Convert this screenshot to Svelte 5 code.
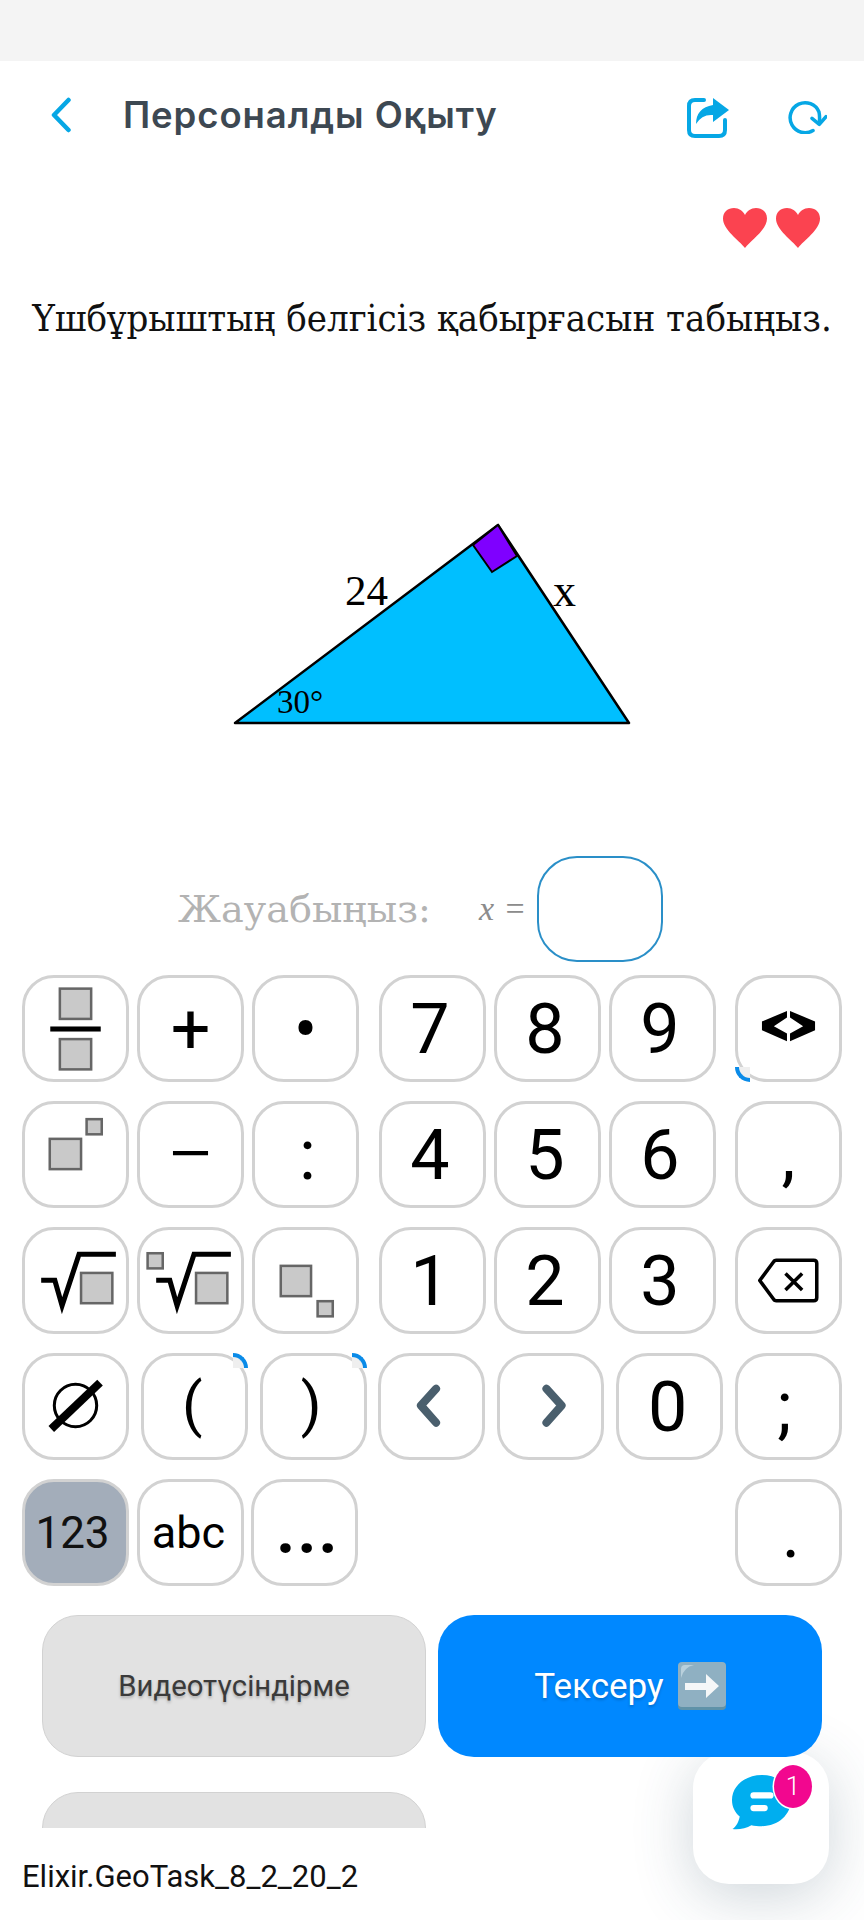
<script>
	const rows = [
		{
			groups: [
				[{ icon: 'fraction' }, { label: '+' }, { label: '•' }],
				[{ label: '7' }, { label: '8' }, { label: '9' }],
				[{ icon: 'toggle', spin: 'bl' }]
			]
		},
		{
			groups: [
				[{ icon: 'power' }, { label: '−', cls: 'minus' }, { label: ':', cls: 'colon' }],
				[{ label: '4' }, { label: '5' }, { label: '6' }],
				[{ label: ',' }]
			]
		},
		{
			groups: [
				[{ icon: 'root' }, { icon: 'nroot' }, { icon: 'sub' }],
				[{ label: '1' }, { label: '2' }, { label: '3' }],
				[{ icon: 'erase' }]
			]
		}
	];

	const arrows = [
		{ icon: 'empty' },
		{ label: '(', spin: 'tr', cls: 'paren' },
		{ label: ')', spin: 'tr', cls: 'paren' },
		{ icon: 'left' },
		{ icon: 'right' },
		{ label: '0' },
		{ label: ';', cls: 'semi' }
	];

	const isDigit = (label) => /[0-9]/.test(label || '');
</script>

{#snippet keyIcon(name)}
	<svg class="key-icon" viewBox="0 0 106 106" aria-hidden="true">
		{#if name === 'fraction'}
			<rect class="slot" x="37.5" y="13.5" width="31" height="30" />
			<rect x="28" y="51" width="50" height="5" />
			<rect class="slot" x="37.5" y="63.5" width="31" height="30" />
		{:else if name === 'power'}
			<rect class="slot" x="27.5" y="37.5" width="31" height="30" />
			<rect class="slot" x="64" y="18" width="15" height="15" />
		{:else if name === 'sub'}
			<rect class="slot" x="28.5" y="38.5" width="30" height="30" />
			<rect class="slot" x="65" y="73.5" width="15" height="15" />
		{:else if name === 'root'}
			<path class="radical" d="M19 52.7H32.5L39.7 78L56.5 27H93" />
			<rect class="slot" x="58.5" y="45.5" width="31" height="30" />
		{:else if name === 'nroot'}
			<path class="radical" d="M19 52.7H32.5L39.7 78L56.5 27H93" />
			<rect class="slot" x="58.5" y="45.5" width="31" height="30" />
			<rect class="slot" x="10.5" y="26" width="15" height="15" />
		{:else if name === 'toggle'}
			<path d="M26.7 46L51.5 35.7V42L38.5 50.7L51.5 58V65.7L26.7 54.7Z" />
			<path d="M54.5 35.7L79.3 46V54.7L54.5 65.7V58L67.5 50.7L54.5 42Z" />
		{:else if name === 'erase'}
			<path class="outline" d="M24.5 53L39 33.5Q40 33 41 33H78Q81 33 81 36V70Q81 73 78 73H41Q40 73 39 72.5Z" />
			<path class="cross" d="M50 46L66.5 62.5M66.5 46L50 62.5" />
		{:else if name === 'empty'}
			<circle class="ring" cx="53" cy="52" r="21" />
			<path class="slash" d="M29 75.3L77.3 29.3" />
		{:else if name === 'left'}
			<path class="chev" d="M57.5 35.5L42.5 52L57.5 69" />
		{:else if name === 'right'}
			<path class="chev" d="M49 35.5L64 52L49 69" />
		{/if}
	</svg>
{/snippet}

{#snippet key(item)}
	<button type="button" class="key {item.cls || ''}" class:num={isDigit(item.label)}>
		{#if item.icon}
			{@render keyIcon(item.icon)}
		{:else}
			{item.label}
		{/if}
		{#if item.spin}
			<span class="spin {item.spin}"></span>
		{/if}
	</button>
{/snippet}

<div class="page">
	<div class="status"></div>

	<header class="topbar">
		<svg class="back" viewBox="0 0 22 36" aria-hidden="true">
			<path d="M18.5 3L4 18L18.5 33" />
		</svg>
		<h1>Персоналды Оқыту</h1>
		<svg class="share" viewBox="0 0 42 40" aria-hidden="true">
			<path class="share-box" d="M17 2H8Q2 2 2 8V32Q2 38 8 38H32Q38 38 38 32V22" />
			<path class="share-arrow" d="M26 0L42 12L26 24V17Q15 16 9 26Q9 10 26 7Z" />
		</svg>
		<svg class="reload" viewBox="0 0 40 34" aria-hidden="true">
			<path class="reload-ring" d="M26 30.500A15 15 0 1 1 32 12Q33 17 32.300 22" />
			<path class="reload-ring" d="M25 18.300L32.300 24.300L39 16.700" />
		</svg>
	</header>

	<div class="lives">
		{#each [0, 1] as heart}
			<svg class="heart" viewBox="0 0 44 40" aria-hidden="true">
				<path d="M22 40C16 32 0 22 0 10.500C0 4 5 0 11 0C16 0 20 3 22 7C24 3 28 0 33 0C39 0 44 4 44 10.500C44 22 28 32 22 40Z" />
			</svg>
		{/each}
	</div>

	<p class="question">Үшбұрыштың белгісіз қабырғасын табыңыз.</p>

	<svg class="figure" viewBox="0 0 864 280" aria-hidden="false">
		<path class="tri" d="M235 243L498 45L629 243Z" />
		<path class="right-angle" d="M473 65L492 92L517 76L498 45Z" />
		<text class="lbl" x="345" y="125" font-size="43">24</text>
		<text class="lbl" x="553" y="126" font-size="46">x</text>
		<text class="lbl" x="277" y="233" font-size="33">30°</text>
	</svg>

	<div class="answer">
		<span class="answer-label">Жауабыңыз:</span>
		<span class="answer-var"><i>x</i> =</span>
		<span class="answer-box"></span>
	</div>

	<div class="keyboard">
		{#each rows as row}
			<div class="row">
				{#each row.groups as group}
					<div class="group">
						{#each group as item}
							{@render key(item)}
						{/each}
					</div>
				{/each}
			</div>
		{/each}

		<div class="row">
			{#each arrows as item}
				{@render key(item)}
			{/each}
		</div>

		<div class="row">
			<div class="group tight">
				<button type="button" class="key word on">123</button>
				<button type="button" class="key word">abc</button>
				<button type="button" class="key dots">...</button>
			</div>
			<button type="button" class="key stop">.</button>
		</div>
	</div>

	<div class="actions">
		<button type="button" class="action video">Видеотүсіндірме</button>
		<button type="button" class="action check">
			Тексеру
			<svg class="emoji" viewBox="0 0 48 48" aria-hidden="true">
				<rect x="0" y="1" width="48" height="47" rx="4" fill="#5f92a8" />
				<rect x="0" y="0" width="48" height="45" rx="4" fill="#8fb0c2" />
				<path d="M3 16V7Q3 3 7 3H16Q6 5 3 16Z" fill="#b9d0dc" />
				<path d="M7 21H28V12L41 24L28 36V28H7Z" fill="#f5f7f8" />
			</svg>
		</button>
		<button type="button" class="action video"></button>
	</div>

	<footer class="footer">Elixir.GeoTask_8_2_20_2</footer>

	<div class="chat">
		<svg class="bubble" viewBox="0 0 62 60" aria-hidden="true">
			<path d="M32 2C15 2 1 13 1 28C1 35 4 41 9 45C8 50 6 55 1.500 58C8 59 16 57 21 54C24 55 28 55 32 55C49 55 62 43 62 28C62 13 49 2 32 2Z" />
			<rect class="bar" x="20" y="20" width="24" height="6.500" rx="3.200" />
			<rect class="bar" x="20" y="33" width="18" height="6.500" rx="3.200" />
		</svg>
		<span class="badge">1</span>
	</div>
</div>

<style>
	:global(body) {
		margin: 0;
		background: #fff;
	}

	.page {
		position: relative;
		width: 864px;
		height: 1920px;
		overflow: hidden;
		background: #fff;
		font-family: Roboto, "Liberation Sans", sans-serif;
	}

	.status {
		height: 61px;
		background: #f4f4f4;
	}

	.topbar {
		display: flex;
		align-items: center;
		height: 108px;
		padding-left: 50px;
	}

	.back {
		width: 22px;
		height: 36px;
		fill: none;
		stroke: #06a7e5;
		stroke-width: 4.500;
		stroke-linecap: round;
		stroke-linejoin: round;
	}

	h1 {
		margin: 0 0 0 51px;
		flex: 1;
		font-family: Inter, "Noto Sans", sans-serif;
		font-size: 36.500px;
		font-weight: 600;
		letter-spacing: 0.900px;
		color: #3d4852;
	}

	.share {
		width: 42px;
		height: 40px;
		margin-top: 6px;
		margin-right: 58px;
	}

	.share-box {
		fill: none;
		stroke: #06a7e5;
		stroke-width: 4;
		stroke-linecap: round;
	}

	.share-arrow {
		fill: #06a7e5;
	}

	.reload {
		width: 40px;
		height: 34px;
		margin-top: 4px;
		margin-right: 37px;
	}

	.reload-ring {
		fill: none;
		stroke: #06a7e5;
		stroke-width: 3.500;
		stroke-linecap: round;
		stroke-linejoin: round;
	}

	.lives {
		display: flex;
		justify-content: flex-end;
		gap: 9px;
		height: 40px;
		margin-top: 39px;
		padding-right: 44px;
	}

	.heart {
		width: 44px;
		height: 40px;
		fill: #fb4350;
	}

	.question {
		margin: 46px 0 0;
		text-align: center;
		font-family: "DejaVu Serif Condensed", "DejaVu Serif", serif;
		font-size: 38px;
		line-height: 48px;
		color: #111;
	}

	.figure {
		display: block;
		width: 864px;
		height: 280px;
		margin-top: 138px;
	}

	.tri {
		fill: #00bfff;
		stroke: #000;
		stroke-width: 2.500;
		stroke-linejoin: round;
	}

	.right-angle {
		fill: #7f00ff;
		stroke: #000;
		stroke-width: 2;
	}

	.lbl {
		font-family: "Liberation Serif", serif;
		fill: #000;
	}

	.answer {
		display: flex;
		align-items: center;
		height: 106px;
		margin-top: 96px;
		padding-left: 178px;
	}

	.answer-label {
		width: 250px;
		font-family: "DejaVu Serif", serif;
		font-size: 38.200px;
		color: #b3b3b3;
		white-space: nowrap;
	}

	.answer-var {
		width: 48px;
		margin-left: 51px;
		font-family: "Liberation Serif", serif;
		font-size: 34px;
		color: #8c8c8c;
		white-space: pre;
		word-spacing: 3px;
	}

	.answer-box {
		box-sizing: border-box;
		width: 126px;
		height: 106px;
		margin-left: 10px;
		border: 2px solid #2a8fc8;
		border-radius: 40px;
	}

	.keyboard {
		display: flex;
		flex-direction: column;
		gap: 19px;
		margin-top: 13px;
		padding: 0 22px;
	}

	.row {
		display: flex;
		justify-content: space-between;
	}

	.group {
		display: flex;
		gap: 8px;
	}

	.group.tight {
		gap: 7.500px;
	}

	.key {
		position: relative;
		display: flex;
		align-items: center;
		justify-content: center;
		width: 107px;
		height: 107px;
		padding: 0;
		box-sizing: border-box;
		background: #fff;
		border: 3px solid #d2d2d2;
		border-radius: 32px;
		font-family: Roboto, "Liberation Sans", sans-serif;
		font-size: 70px;
		line-height: 1;
		color: #000;
	}

	.key.num {
		padding-right: 4px;
	}

	.key.paren {
		padding-right: 4px;
		padding-bottom: 4px;
		font-size: 60px;
	}

	.key.minus {
		font-size: 86px;
		font-weight: 300;
	}

	.key.colon {
		padding-left: 4px;
	}

	.key.semi {
		padding-right: 8px;
	}

	.key.stop {
		padding-left: 5px;
	}

	.key.word {
		padding-right: 3px;
		font-size: 45px;
	}

	.key.word.on {
		padding-right: 6px;
		font-size: 44px;
		background: #a3adba;
		color: #111;
	}

	.key.dots {
		padding-left: 5px;
		padding-bottom: 14px;
		font-size: 76px;
		font-weight: 500;
	}

	.key-icon {
		position: absolute;
		left: -3px;
		top: -3px;
		width: 107px;
		height: 107px;
	}

	.slot {
		fill: #c9c9c9;
		stroke: #666;
		stroke-width: 2.500;
	}

	.radical {
		fill: none;
		stroke: #000;
		stroke-width: 5;
	}

	.outline {
		fill: none;
		stroke: #000;
		stroke-width: 3.500;
		stroke-linejoin: round;
	}

	.cross {
		fill: none;
		stroke: #000;
		stroke-width: 3.500;
	}

	.ring {
		fill: none;
		stroke: #000;
		stroke-width: 3;
	}

	.slash {
		fill: none;
		stroke: #000;
		stroke-width: 8;
	}

	.chev {
		fill: none;
		stroke: #4a5f6d;
		stroke-width: 8;
		stroke-linecap: round;
		stroke-linejoin: round;
	}

	.spin {
		position: absolute;
		box-sizing: border-box;
		width: 15px;
		height: 15px;
		background: #efefef;
	}

	.spin.bl {
		left: -3px;
		bottom: -3px;
		border-left: 4px solid #0a8be8;
		border-bottom: 4px solid #0a8be8;
		border-bottom-left-radius: 15px;
	}

	.spin.tr {
		right: -3px;
		top: -3px;
		border-right: 4px solid #0a8be8;
		border-top: 4px solid #0a8be8;
		border-top-right-radius: 15px;
	}

	.actions {
		position: relative;
		z-index: 2;
		display: flex;
		flex-wrap: wrap;
		align-content: flex-start;
		gap: 35px 12px;
		height: 213px;
		margin-top: 29px;
		padding-left: 42px;
		overflow: hidden;
	}

	.action {
		box-sizing: border-box;
		width: 384px;
		height: 142px;
		border-radius: 36px;
		font-family: Roboto, "Liberation Sans", sans-serif;
	}

	.video {
		background: #e2e2e2;
		border: 1.500px solid #d2d2d2;
		color: #3a3a3a;
		font-size: 29.300px;
		text-shadow: 0 2px 3px rgba(0, 0, 0, 0.25);
	}

	.check {
		display: flex;
		align-items: center;
		justify-content: center;
		gap: 14px;
		background: #0088ff;
		border: none;
		color: #fff;
		font-size: 35px;
		text-shadow: 0 2px 3px rgba(0, 0, 0, 0.2);
	}

	.emoji {
		width: 48px;
		height: 48px;
	}

	.footer {
		padding: 30px 0 0 22px;
		font-size: 31px;
		line-height: 38px;
		color: #111;
	}

	.chat {
		position: absolute;
		left: 693px;
		top: 1752px;
		width: 136px;
		height: 132px;
		border-radius: 36px;
		background: #fff;
		box-shadow: 0 12px 60px rgba(50, 80, 100, 0.24);
	}

	.bubble {
		position: absolute;
		left: 37px;
		top: 21px;
		width: 62px;
		height: 58px;
		fill: #00aeef;
	}

	.bar {
		fill: #fff;
	}

	.badge {
		position: absolute;
		left: 81px;
		top: 13px;
		width: 38px;
		height: 43px;
		border-radius: 50%;
		background: #f2078f;
		box-shadow: 0 0 0 1.500px #fff;
		color: #fff;
		font-size: 26px;
		font-weight: 300;
		line-height: 42px;
		text-align: center;
	}
</style>
